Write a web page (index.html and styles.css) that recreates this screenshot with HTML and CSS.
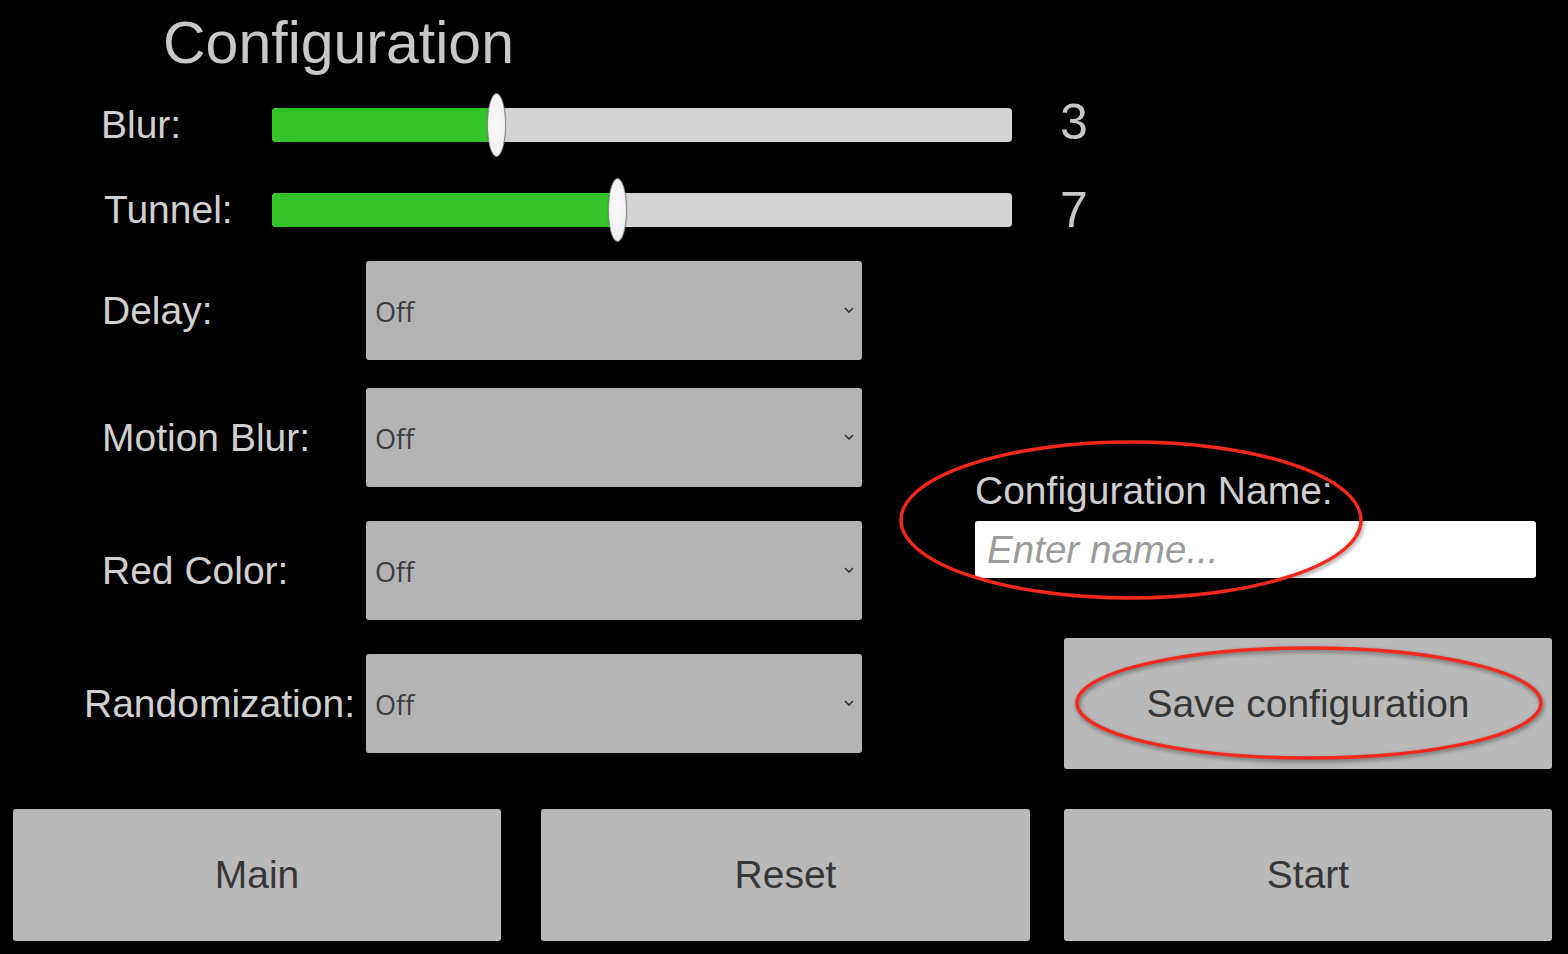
FILE: index.html
```html
<!DOCTYPE html>
<html lang="en">
<head>
<meta charset="utf-8">
<title>Configuration</title>
<link rel="stylesheet" href="styles.css">
</head>
<body>
<div class="screen">
  <h1 class="title">Configuration</h1>

  <div class="sliders">
    <div class="slider-row">
      <span class="label">Blur:</span>
      <div class="track">
        <div class="fill" style="width:30.4%"></div>
        <div class="thumb" style="left:30.4%"></div>
      </div>
      <span class="value value-up">3</span>
    </div>
    <div class="slider-row">
      <span class="label label-nudge">Tunnel:</span>
      <div class="track">
        <div class="fill" style="width:46.8%"></div>
        <div class="thumb" style="left:46.8%"></div>
      </div>
      <span class="value">7</span>
    </div>
  </div>

  <div class="lower">
    <div class="dropdowns">
      <div class="dd-row">
        <span class="label">Delay:</span>
        <div class="select"><span class="select-text">Off</span><svg class="chev" width="10" height="6" viewBox="0 0 10 6"><polyline points="1,1 5,5 9,1" fill="none" stroke="#333" stroke-width="1.6"/></svg></div>
      </div>
      <div class="dd-row dd-row-tight">
        <span class="label">Motion Blur:</span>
        <div class="select"><span class="select-text">Off</span><svg class="chev" width="10" height="6" viewBox="0 0 10 6"><polyline points="1,1 5,5 9,1" fill="none" stroke="#333" stroke-width="1.6"/></svg></div>
      </div>
      <div class="dd-row">
        <span class="label">Red Color:</span>
        <div class="select"><span class="select-text">Off</span><svg class="chev" width="10" height="6" viewBox="0 0 10 6"><polyline points="1,1 5,5 9,1" fill="none" stroke="#333" stroke-width="1.6"/></svg></div>
      </div>
      <div class="dd-row">
        <span class="label label-wide">Randomization:</span>
        <div class="select"><span class="select-text">Off</span><svg class="chev" width="10" height="6" viewBox="0 0 10 6"><polyline points="1,1 5,5 9,1" fill="none" stroke="#333" stroke-width="1.6"/></svg></div>
      </div>
    </div>

    <div class="name-panel">
      <label class="name-label" for="cfgname">Configuration Name:</label>
      <input class="name-input" id="cfgname" type="text" placeholder="Enter name...">
      <div class="btn btn-save">Save configuration</div>
    </div>
  </div>

  <div class="actions">
    <div class="btn">Main</div>
    <div class="btn btn-mid">Reset</div>
    <div class="btn">Start</div>
  </div>

  <svg class="annotations" width="1568" height="954" viewBox="0 0 1568 954">
    <ellipse cx="1131" cy="520" rx="230" ry="78" fill="none" stroke="#f5281c" stroke-width="3.4"/>
    <ellipse cx="1309" cy="703" rx="232" ry="55" fill="none" stroke="#f5281c" stroke-width="3.4"/>
  </svg>
</div>
</body>
</html>
```
FILE: styles.css
```css
* { box-sizing: border-box; }

html, body {
  margin: 0;
  padding: 0;
  background: #000;
}

body {
  font-family: "Liberation Sans", Arial, sans-serif;
  color: #d0d0d0;
}

.screen {
  position: relative;
  width: 1568px;
  height: 954px;
  overflow: hidden;
  background: #000;
}

.title {
  margin: 0;
  padding: 8px 0 0 163px;
  font-size: 59px;
  line-height: 70px;
  font-weight: normal;
  color: #c8c8c8;
}

/* Sliders */
.sliders {
  display: flex;
  flex-direction: column;
  gap: 21px;
  margin-top: 15px;
}

.slider-row {
  display: flex;
  align-items: center;
  height: 64px;
  padding-left: 101px;
}

.label {
  font-size: 39px;
  color: #d0d0d0;
  white-space: nowrap;
}

.slider-row .label {
  width: 171px;
  flex: none;
}

.label-nudge {
  padding-left: 3px;
}

.track {
  position: relative;
  width: 740px;
  height: 34px;
  background: #d4d4d4;
  border-radius: 4px;
  flex: none;
}

.fill {
  height: 100%;
  background: #32c328;
  border-radius: 4px 0 0 4px;
}

.thumb {
  position: absolute;
  top: -15px;
  width: 19px;
  height: 64px;
  margin-left: -10px;
  border-radius: 50%;
  background: radial-gradient(ellipse at 45% 45%, #f8f8f8 0%, #f2f2f2 60%, #e2e2e2 100%);
  border: 1px solid #8a8a8a;
  box-shadow: 0 0 1px rgba(0,0,0,0.6);
}

.value {
  margin-left: 48px;
  margin-bottom: 0;
  font-size: 50px;
  color: #c8c8c8;
}

.value-up {
  margin-bottom: 6px;
}

/* Lower area */
.lower {
  display: flex;
  margin-top: 19px;
  height: 508px;
}

.dropdowns {
  display: flex;
  flex-direction: column;
  gap: 34px;
  padding-left: 102px;
}

.dd-row {
  display: flex;
  align-items: center;
  height: 99px;
}

.dd-row-tight {
  margin-top: -6px;
}

.dd-row .label {
  width: 264px;
  flex: none;
}

.dd-row .label-wide {
  width: 282px;
  margin-left: -18px;
}

.select {
  width: 496px;
  height: 99px;
  background: #b3b3b3;
  border-radius: 3px;
  display: flex;
  align-items: center;
  justify-content: space-between;
  padding: 0 8px 0 9px;
}

.select-text {
  font-family: "Open Sans", "Noto Sans", sans-serif;
  font-size: 27px;
  color: #3c3c3c;
  margin-top: 1px;
}

.chev {
  display: block;
  margin-top: -2px;
}

.name-panel {
  display: flex;
  flex-direction: column;
  align-items: flex-start;
  margin-left: 113px;
  padding-top: 207px;
  width: 577px;
}

.name-label {
  font-size: 39px;
  line-height: 46px;
  color: #cfcfcf;
}

.name-input {
  margin-top: 7px;
  width: 561px;
  height: 57px;
  border: none;
  border-radius: 3px;
  background: #fff;
  padding: 0 12px;
  font-family: "Liberation Sans", Arial, sans-serif;
  font-size: 38.6px;
  color: #333;
  outline: none;
}

.name-input::placeholder {
  font-style: italic;
  color: #9b9b9b;
}

/* Buttons */
.btn {
  display: flex;
  align-items: center;
  justify-content: center;
  width: 488px;
  height: 132px;
  background: #b9b9b9;
  border-radius: 3px;
  font-size: 39px;
  color: #363636;
}

.btn-save {
  margin-top: 60px;
  margin-left: 89px;
  height: 131px;
}

.actions {
  display: flex;
  margin-top: 40px;
  padding-left: 13px;
}

.btn-mid {
  width: 489px;
  margin: 0 34px 0 40px;
}

.annotations {
  position: absolute;
  left: 0;
  top: 0;
  pointer-events: none;
  filter: drop-shadow(1px 2px 2px rgba(0,0,0,0.45));
}
```
